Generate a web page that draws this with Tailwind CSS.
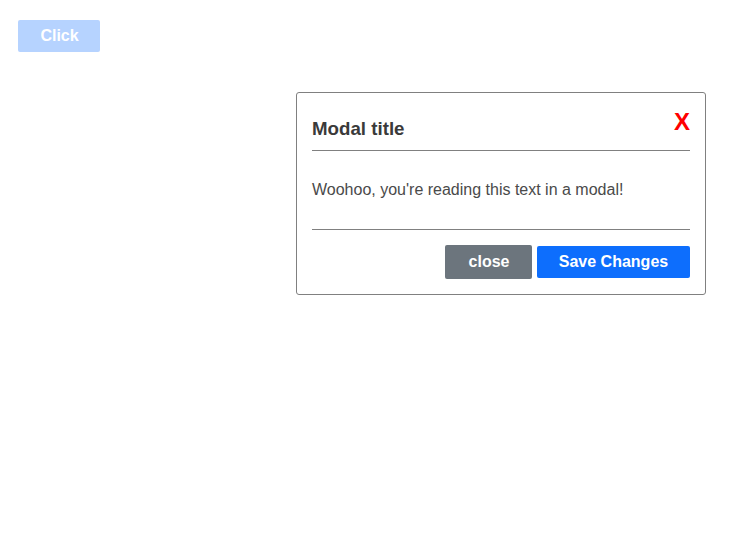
<!DOCTYPE html>
<html lang="en"><head><meta charset="utf-8"><title>Modal</title>
<script src="https://cdn.jsdelivr.net/npm/@tailwindcss/browser@4"></script></head>
<body class="bg-white font-['Liberation_Sans',Arial,sans-serif] text-base text-[#3a3a3a]">
<div class="h-[559px] overflow-hidden pl-[18px] pt-5">
<button class="block h-8 w-[82px] rounded-[2px] bg-[#b6d3ff] pb-px pl-px font-bold text-white">Click</button>
<section class="ml-[278px] mt-10 h-[203px] w-[410px] rounded-[3px] border border-[#808080] px-[15px]">
<header class="flex h-[58px] justify-between border-b border-[#808080]">
<h2 class="mt-[22px] text-[18.72px] leading-7 font-bold">Modal title</h2>
<button class="mt-[13px] h-8 text-2xl leading-8 font-bold text-[#f00]">X</button>
</header>
<p class="flex h-[79px] items-center border-b border-[#808080] text-[#4a4a4a]">Woohoo, you're reading this text in a modal!</p>
<footer class="flex items-center justify-end gap-[5px] pt-[15px]">
<button class="h-[34px] w-[87px] rounded-[2px] bg-[#6c757d] pb-px pl-px font-bold text-white">close</button>
<button class="h-8 w-[153px] rounded-[2px] bg-[#0d6efd] pb-px font-bold text-white">Save Changes</button>
</footer>
</section>
</div>
</body></html>
